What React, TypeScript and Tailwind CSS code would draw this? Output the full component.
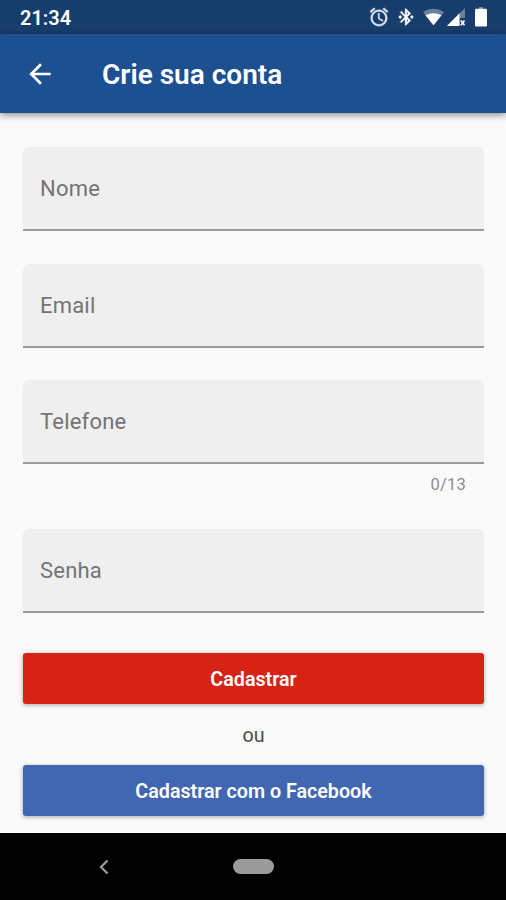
import React from 'react';
import { MdArrowBack } from 'react-icons/md';

const AlarmIcon = () => (
  <svg viewBox="0 0 24 24" className="h-[22px] w-[22px]" fill="#d9e3f4" stroke="#d9e3f4" strokeWidth="0.4">
    <path d="M22 5.72l-4.6-3.86-1.29 1.53 4.6 3.86L22 5.72zM7.88 3.39L6.6 1.86 2 5.71l1.29 1.53 4.59-3.85zM12.5 8H11v6l4.75 2.85.75-1.23-4-2.37V8zM12 4c-4.97 0-9 4.03-9 9s4.02 9 9 9c4.97 0 9-4.03 9-9s-4.03-9-9-9zm0 16c-3.87 0-7-3.13-7-7s3.13-7 7-7 7 3.13 7 7-3.13 7-7 7z" />
  </svg>
);

const BluetoothIcon = () => (
  <svg viewBox="0 0 24 24" className="h-5 w-5" fill="currentColor" stroke="currentColor" strokeWidth="0.5">
    <path d="M7 12l-2-2-2 2 2 2 2-2zm10.71-4.29L12 2h-1v7.59L6.41 5 5 6.41 10.59 12 5 17.59 6.41 19 11 14.41V22h1l5.71-5.71-4.3-4.29 4.3-4.29zM13 5.83l1.88 1.88L13 9.59V5.83zm1.88 10.46L13 18.17v-3.76l1.88 1.88zM19 10l-2 2 2 2 2-2-2-2z" />
  </svg>
);

const WifiIcon = () => (
  <svg viewBox="0 0 22 18" className="h-[18px] w-[21px]" fill="currentColor">
    <path d="M0 4C6-1 16-1 22 4L11 18Z" fillOpacity="0.35" />
    <path d="M2.6 7.2C8 4.2 14 4.2 19.4 7.2L11 17.6Z" />
  </svg>
);

const SignalIcon = () => (
  <svg viewBox="0 0 18 18" className="h-[18px] w-[18px]" fill="currentColor">
    <path d="M18 0V10H12.5V18H0Z" fillOpacity="0.35" />
    <path d="M12.5 5.2V18H0Z" />
    <path d="M13.8 12.5l3.7 4.7M17.5 12.5L13.8 17.2" stroke="currentColor" strokeWidth="1.7" />
  </svg>
);

const BatteryIcon = () => (
  <svg viewBox="0 0 12 20" className="h-5 w-3" fill="currentColor">
    <path d="M4 0h4v2H4z" fillOpacity="0.4" />
    <rect y="1.8" width="12" height="17.7" rx="1.2" />
  </svg>
);

const StatusBar = () => (
  <div className="flex h-[34px] items-center justify-between bg-[#173d6c] pr-[19px] pl-5 text-white">
    <span className="pt-0.5 text-[20px] leading-6 font-semibold">21:34</span>
    <div className="flex items-center">
      <AlarmIcon />
      <span className="w-[6px]" />
      <BluetoothIcon />
      <span className="w-[7px]" />
      <WifiIcon />
      <span className="w-[3px]" />
      <SignalIcon />
      <span className="w-[10px]" />
      <BatteryIcon />
    </div>
  </div>
);

const AppBar = () => (
  <header className="relative z-10 flex h-[79px] items-center bg-[#1d5091] text-white shadow-[0_2px_7px_rgba(0,0,0,0.45)]">
    <button className="ml-6" aria-label="Voltar">
      <MdArrowBack className="h-8 w-8" />
    </button>
    <h1 className="ml-[46px] pt-0.5 text-[28px] leading-8 font-semibold">Crie sua conta</h1>
  </header>
);

const Field = ({ label }: { label: string }) => (
  <div className="flex h-[84px] items-center rounded-t-[6px] border-b-2 border-[#9a9a9a] bg-[#efefef] px-[17px] pt-px text-[22px] tracking-[0.2px] text-[#747474]">
    {label}
  </div>
);

export default function App() {
  return (
    <div className="flex h-[900px] w-[506px] flex-col overflow-hidden bg-[#fafafa] font-['Roboto',sans-serif]">
      <StatusBar />
      <AppBar />

      <main className="flex flex-1 flex-col pt-[34px] pr-[22px] pl-[23px]">
        <Field label="Nome" />
        <div className="mt-[33px]">
          <Field label="Email" />
        </div>
        <div className="mt-8">
          <Field label="Telefone" />
          <p className="mt-[9px] pr-[18px] text-right text-[16.5px] leading-6 tracking-[0.2px] text-[#8c8c8c]">0/13</p>
        </div>
        <div className="mt-8">
          <Field label="Senha" />
        </div>

        <button className="mt-10 h-[51px] shrink-0 rounded-[3px] bg-[#d62316] pt-0.5 text-[19.7px] font-semibold text-white shadow-[0_1px_4px_rgba(0,0,0,0.35)]">
          Cadastrar
        </button>
        <p className="mt-5 text-center text-[19.7px] leading-6 text-[#4a4a4a]">ou</p>
        <button className="mt-[17px] h-[51px] shrink-0 rounded-[3px] bg-[#4267b2] pt-0.5 text-[19.7px] font-semibold text-white shadow-[0_1px_4px_rgba(0,0,0,0.35)]">
          Cadastrar com o Facebook
        </button>
      </main>

      <nav className="flex h-[67px] items-center bg-black">
        <svg viewBox="0 0 10 16" className="ml-[99px] h-4 w-[10px]" fill="none" stroke="#9e9e9e" strokeWidth="2.2">
          <path d="M8.5 1.5L2 8L8.5 14.5" />
        </svg>
        <div className="ml-[124px] h-[15px] w-[41px] rounded-full bg-[#9b9b9b]" />
      </nav>
    </div>
  );
}
